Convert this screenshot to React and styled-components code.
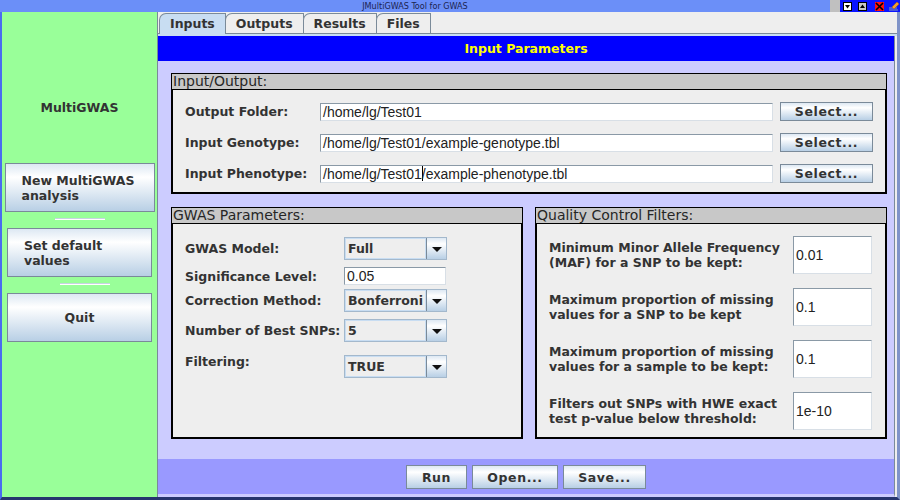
import styled, { createGlobalStyle } from "styled-components";

const GlobalStyle = createGlobalStyle`
  html, body {
    margin: 0;
    padding: 0;
    background: #6b8ff8;
  }
  body {
    font-family: "DejaVu Sans", sans-serif;
  }
  * {
    box-sizing: border-box;
  }
`;

const ocean = `
  background: linear-gradient(#dde8f3 0%, #ffffff 28%, #b8cfe5 100%);
  border: 1px solid #7a8a99;
  color: #333333;
  font-family: "DejaVu Sans", sans-serif;
  font-weight: 700;
  font-size: 12.5px;
`;

/********************* window chrome *************************/
const Window = styled.div`
  width: 900px;
  height: 500px;
  display: flex;
  flex-direction: column;
  overflow: hidden;
  background: #6b8ff8;
`;

const TitleBar = styled.div`
  height: 12px;
  display: flex;
  background: #6b8ff8;
`;

const TitleText = styled.div`
  flex: 1;
  text-align: center;
  font-family: "DejaVu Sans Condensed", "DejaVu Sans", sans-serif;
  font-stretch: condensed;
  font-size: 9px;
  line-height: 12px;
  color: #1c2450;
`;

const TitleGap = styled.div`
  width: 10px;
  background: #c0c0c0;
`;

const TitleControls = styled.div`
  width: 60px;
  display: flex;
  align-items: center;
  padding-left: 3px;
  background: #0a14ff;
  svg {
    display: block;
  }
`;

const Frame = styled.div`
  flex: 1;
  display: flex;
  min-width: 0;
  border-left: 2px solid #4a6cf0;
  border-right: 3px solid #7f93c8;
  border-bottom: 3px solid #26356e;
`;

/********************* sidebar *************************/
const Sidebar = styled.div`
  width: 156px;
  flex-shrink: 0;
  background: #99ff99;
  border-right: 1px solid #7a8a99;
  display: flex;
  flex-direction: column;
  align-items: center;
  padding-top: 88px;
`;

const Brand = styled.div`
  font-weight: 700;
  font-size: 12.5px;
  line-height: 16px;
  color: #333333;
  margin-bottom: 47px;
`;

const SideButton = styled.button`
  ${ocean}
  width: ${(p) => p.$width}px;
  height: 49px;
  padding: 0 0 0 ${(p) => (p.$center ? 0 : 16)}px;
  text-align: ${(p) => (p.$center ? "center" : "left")};
  line-height: 15px;
  margin: 0;
`;

const Separator = styled.div`
  width: 50px;
  height: 2px;
  margin: 6px 0 8px ${(p) => p.$shift || 0}px;
  border-top: 1px solid #c6d3e0;
  border-bottom: 1px solid #ffffff;
  background: #ffffff;
`;

/********************* main tab area *************************/
const Main = styled.div`
  flex: 1;
  min-width: 0;
  display: flex;
  flex-direction: column;
  background: #eeeeee;
`;

const TabStrip = styled.div`
  height: 22px;
  display: flex;
  align-items: flex-end;
  padding-left: 1px;
  border-bottom: 1px solid #7a8a99;
`;

const Tab = styled.div`
  position: relative;
  height: ${(p) => (p.$active ? 21 : 20)}px;
  margin-bottom: ${(p) => (p.$active ? -1 : 0)}px;
  margin-right: -1px;
  padding: 0 10px;
  border: 1px solid #7a8a99;
  border-bottom: none;
  border-top-left-radius: 7px 7px;
  background: ${(p) => (p.$active ? "#c8ddf2" : "#eeeeee")};
  font-weight: 700;
  font-size: 12.5px;
  line-height: 19px;
  color: #333333;
  z-index: ${(p) => (p.$active ? 1 : 0)};
`;

const TabBand = styled.div`
  height: 2px;
  background: #c8ddf2;
`;

const TabBody = styled.div`
  flex: 1;
  min-width: 0;
  display: flex;
  flex-direction: column;
  margin-right: 2px;
  border-right: 1px solid #7a8a99;
  border-bottom: 3px solid #ccccff;
`;

const Header = styled.div`
  height: 25px;
  background: #0000ff;
  color: #ffff00;
  font-weight: 700;
  font-size: 12.5px;
  line-height: 25px;
  text-align: center;
`;

const Content = styled.div`
  height: 398px;
  background: #ccccff;
  display: flex;
  flex-direction: column;
  gap: 13px;
  padding: 12px 7px 20px 13px;
`;

const PanelRow = styled.div`
  display: flex;
  gap: 12px;
`;

const Panel = styled.div`
  flex: 1;
  min-width: 0;
  height: ${(p) => p.$height}px;
  display: flex;
  flex-direction: column;
  border: 1px solid #000000;
`;

const PanelTitle = styled.div`
  height: 16px;
  background: #c8c8c8;
  border-bottom: 1px solid #000000;
  padding-left: 1px;
  font-size: 14px;
  line-height: 15px;
  color: #262626;
`;

const PanelBody = styled.div`
  flex: 1;
  background: #eeeeee;
  border: 1px solid #000000;
  border-top: none;
`;

/********************* form parts *************************/
const FileGrid = styled.div`
  display: grid;
  grid-template-columns: 128px 453px 93px;
  grid-auto-rows: 19px;
  column-gap: 7px;
  row-gap: 12px;
  align-items: center;
  padding: 12px 12px 0 12px;
`;

const Label = styled.div`
  font-weight: 700;
  font-size: 12.5px;
  line-height: 15px;
  color: #333333;
  white-space: nowrap;
`;

const TextField = styled.div`
  height: ${(p) => p.$height || 18}px;
  background: #ffffff;
  border: 1px solid #8a99a6;
  border-right-color: #d8dfe6;
  border-bottom-color: #d8dfe6;
  font-family: "Liberation Sans", Arial, sans-serif;
  font-size: 14px;
  color: #222222;
  padding-left: 2px;
  display: flex;
  align-items: center;
  white-space: nowrap;
  overflow: hidden;
`;

const Caret = styled.span`
  display: inline-block;
  width: 1px;
  height: 15px;
  background: #000000;
  margin: 0 -1px 0 0;
`;

const SmallButton = styled.button`
  ${ocean}
  height: ${(p) => p.$height || 19}px;
  width: ${(p) => p.$width || 93}px;
  padding: 0;
  margin: 0;
  letter-spacing: 0.6px;
`;

const ParamList = styled.div`
  display: flex;
  flex-direction: column;
  padding: 13px 12px 0 12px;
`;

const ParamRow = styled.div`
  display: flex;
  align-items: ${(p) => (p.$top ? "flex-start" : "center")};
  margin-top: ${(p) => p.$gap || 0}px;
  ${Label} {
    width: 159px;
    margin-top: ${(p) => (p.$top ? -1 : 0)}px;
  }
`;

const Combo = styled.div`
  width: 103px;
  height: 23px;
  display: flex;
  border: 1px solid #a3b8cc;
  background: #eeeeee;
`;

const ComboValue = styled.div`
  flex: 1;
  border: 1px solid #c8ddf2;
  font-weight: 700;
  font-size: 12.5px;
  color: #333333;
  padding-left: 2px;
  display: flex;
  align-items: center;
  overflow: hidden;
  white-space: nowrap;
`;

const ComboArrow = styled.div`
  width: 20px;
  border-left: 1px solid #7a8a99;
  background: linear-gradient(#dde8f3 0%, #ffffff 28%, #b8cfe5 100%);
  display: flex;
  align-items: center;
  justify-content: center;
  &::after {
    content: "";
    border-left: 5px solid transparent;
    border-right: 5px solid transparent;
    border-top: 5px solid #111111;
    margin-top: 1px;
  }
`;

const FilterGrid = styled.div`
  display: grid;
  grid-template-columns: 1fr 79px;
  grid-auto-rows: 38px;
  row-gap: 14px;
  align-items: center;
  padding: 12px 13px 0 12px;
`;

const BottomBar = styled.div`
  height: 35px;
  background: #9999ff;
  display: flex;
  justify-content: center;
  align-items: center;
  gap: 5px;
  padding-top: 1px;
`;

function Combobox({ value }) {
  return (
    <Combo>
      <ComboValue>{value}</ComboValue>
      <ComboArrow />
    </Combo>
  );
}

function TitleButtons() {
  return (
    <TitleControls>
      <svg width="9" height="9" viewBox="0 0 9 9">
        <rect x="0.5" y="0.5" width="8" height="8" fill="#fff" stroke="#000" />
        <path d="M2 3 H7 L4.5 6.5 Z" fill="#000" />
      </svg>
      <svg width="9" height="9" viewBox="0 0 9 9" style={{ marginLeft: 6 }}>
        <rect x="0.5" y="0.5" width="8" height="8" fill="#c8c8c8" stroke="#000" />
        <path d="M2 6 H7 L4.5 2.5 Z" fill="#000" />
      </svg>
      <svg width="9" height="9" viewBox="0 0 9 9" style={{ marginLeft: 8 }}>
        <rect x="0" y="0" width="9" height="9" fill="#ff1010" />
        <path d="M1 1 L8 8 M8 1 L1 8" stroke="#000" strokeWidth="1.6" />
      </svg>
      <svg width="12" height="11" viewBox="0 0 12 11" style={{ marginLeft: 4 }}>
        <path d="M1 7 H9 M1 9 H10" stroke="#8a9ab0" strokeWidth="1" />
        <path d="M4 6 L9 1 L11 3 L6 8 Z" fill="#f0a030" stroke="#b06010" strokeWidth="0.6" />
      </svg>
    </TitleControls>
  );
}

export default function App() {
  return (
    <Window>
      <GlobalStyle />
      <TitleBar>
        <TitleText>JMultiGWAS Tool for GWAS</TitleText>
        <TitleGap />
        <TitleButtons />
      </TitleBar>
      <Frame>
        <Sidebar>
          <Brand>MultiGWAS</Brand>
          <SideButton $width={150}>
            New MultiGWAS
            <br />
            analysis
          </SideButton>
          <Separator />
          <SideButton $width={145}>
            Set default
            <br />
            values
          </SideButton>
          <Separator $shift={10} />
          <SideButton $width={145} $center>
            Quit
          </SideButton>
        </Sidebar>

        <Main>
          <TabStrip>
            <Tab $active>Inputs</Tab>
            <Tab>Outputs</Tab>
            <Tab>Results</Tab>
            <Tab>Files</Tab>
          </TabStrip>
          <TabBand />
          <TabBody>
            <Header>Input Parameters</Header>
            <Content>
              <Panel $height={121}>
                <PanelTitle>Input/Output:</PanelTitle>
                <PanelBody>
                  <FileGrid>
                    <Label>Output Folder:</Label>
                    <TextField>/home/lg/Test01</TextField>
                    <SmallButton>Select...</SmallButton>

                    <Label>Input Genotype:</Label>
                    <TextField>/home/lg/Test01/example-genotype.tbl</TextField>
                    <SmallButton>Select...</SmallButton>

                    <Label>Input Phenotype:</Label>
                    <TextField>
                      /home/lg/Test01
                      <Caret />
                      /example-phenotype.tbl
                    </TextField>
                    <SmallButton>Select...</SmallButton>
                  </FileGrid>
                </PanelBody>
              </Panel>

              <PanelRow>
                <Panel $height={232}>
                  <PanelTitle>GWAS Parameters:</PanelTitle>
                  <PanelBody>
                    <ParamList>
                      <ParamRow>
                        <Label>GWAS Model:</Label>
                        <Combobox value="Full" />
                      </ParamRow>
                      <ParamRow $gap={7}>
                        <Label>Significance Level:</Label>
                        <TextField style={{ width: 102 }}>0.05</TextField>
                      </ParamRow>
                      <ParamRow $gap={4}>
                        <Label>Correction Method:</Label>
                        <Combobox value="Bonferroni" />
                      </ParamRow>
                      <ParamRow $gap={7}>
                        <Label>Number of Best SNPs:</Label>
                        <Combobox value="5" />
                      </ParamRow>
                      <ParamRow $gap={13} $top>
                        <Label>Filtering:</Label>
                        <Combobox value="TRUE" />
                      </ParamRow>
                    </ParamList>
                  </PanelBody>
                </Panel>

                <Panel $height={232}>
                  <PanelTitle>Quality Control Filters:</PanelTitle>
                  <PanelBody>
                    <FilterGrid>
                      <Label>
                        Minimum Minor Allele Frequency
                        <br />
                        (MAF) for a SNP to be kept:
                      </Label>
                      <TextField $height={38}>0.01</TextField>

                      <Label>
                        Maximum proportion of missing
                        <br />
                        values for a SNP to be kept
                      </Label>
                      <TextField $height={38}>0.1</TextField>

                      <Label>
                        Maximum proportion of missing
                        <br />
                        values for a sample to be kept:
                      </Label>
                      <TextField $height={38}>0.1</TextField>

                      <Label>
                        Filters out SNPs with HWE exact
                        <br />
                        test p-value below threshold:
                      </Label>
                      <TextField $height={38}>1e-10</TextField>
                    </FilterGrid>
                  </PanelBody>
                </Panel>
              </PanelRow>
            </Content>
            <BottomBar>
              <SmallButton $width={61} $height={24}>Run</SmallButton>
              <SmallButton $width={86} $height={24}>Open...</SmallButton>
              <SmallButton $width={83} $height={24}>Save...</SmallButton>
            </BottomBar>
          </TabBody>
        </Main>
      </Frame>
    </Window>
  );
}
